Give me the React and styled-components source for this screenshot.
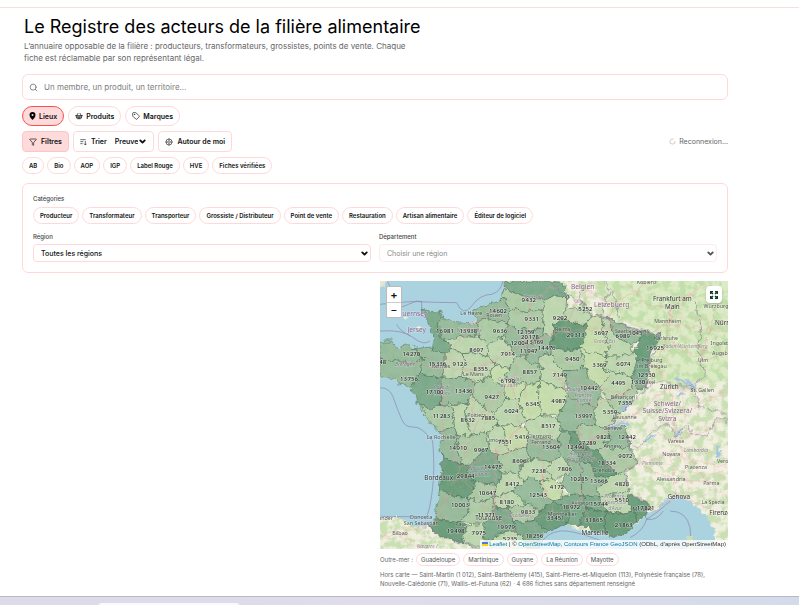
import React, { useState } from "react";
import styled, { createGlobalStyle } from "styled-components";
import { Search, ShoppingBasket, Tag, Funnel, ChevronDown, LoaderCircle } from "lucide-react";

const GlobalStyle = createGlobalStyle`
    * {
        box-sizing: border-box;
    }
    body {
        margin: 0;
        background: #fff;
        color: #111;
        font-family: Inter, "Liberation Sans", sans-serif;
    }
    button, input, select {
        font-family: inherit;
        color: inherit;
    }
`

const TopRule = styled.div`
    height: 8px;
    border-bottom: 1px solid #ffdcdc;
`

const Page = styled.main`
    padding: 6px 71px 8px 22px;
`

const Title = styled.h1`
    margin: 0 2px;
    font-size: 18px;
    line-height: 25px;
    font-weight: 400;
    color: #000;
`

const Intro = styled.p`
    margin: 1px 2px 0;
    max-width: 390px;
    font-size: 8px;
    line-height: 12px;
    color: #666;
`

const SearchBox = styled.label`
    display: flex;
    align-items: center;
    gap: 6px;
    height: 26px;
    margin-top: 10px;
    padding: 0 6px;
    border: 1px solid #ffd9d9;
    border-radius: 6px;
    color: #666;
`

const SearchInput = styled.input`
    flex: 1;
    border: 0;
    outline: 0;
    padding: 0;
    background: none;
    font-size: 8px;

    &::placeholder {
        color: #808080;
        opacity: 1;
    }
`

const Row = styled.div`
    display: flex;
    align-items: center;
    flex-wrap: wrap;
    gap: ${props => props.$gap || 4}px;
    margin-top: ${props => props.$top || 0}px;
`

const Tab = styled.button`
    display: flex;
    align-items: center;
    gap: 3px;
    height: 20px;
    padding: 0 6px;
    border: 1px solid ${props => props.$active ? "#f94f4f" : "#ffd9d9"};
    border-radius: 10px;
    background: ${props => props.$active ? "#ffdada" : "#fff"};
    font-size: 7px;
    font-weight: 600;
`

const Tool = styled.button`
    display: flex;
    align-items: center;
    gap: 4px;
    height: 21px;
    padding: 0 6px;
    border: 1px solid ${props => props.$active ? "#ffc4c4" : "#ffd9d9"};
    border-radius: 4px;
    background: ${props => props.$active ? "#ffdada" : "#fff"};
    font-size: 7px;
    font-weight: 600;
`

const SortBox = styled(Tool).attrs({ as: "label" })``

const SortField = styled.span`
    display: flex;
    align-items: center;
    margin-left: 4px;
`

const SortSelect = styled.select`
    appearance: none;
    border: 0;
    padding: 0;
    background: none;
    font-size: 7px;
    font-weight: 600;
    field-sizing: content;
`

const Status = styled.span`
    display: flex;
    align-items: center;
    gap: 3px;
    margin-left: auto;
    font-size: 7px;
    color: #666;
`

const Chip = styled.button`
    height: 17px;
    padding: 0 6px;
    border: 1px solid #ffd9d9;
    border-radius: 9px;
    background: #fff;
    font-size: 6px;
    font-weight: 600;
`

const Panel = styled.section`
    margin-top: 9px;
    padding: 11px 10px 10px;
    border: 1px solid #ffd9d9;
    border-radius: 6px;
`

const Caption = styled.span`
    display: block;
    font-size: 6px;
    line-height: 8px;
    font-weight: 500;
    color: #444;
`

const Fields = styled.div`
    display: grid;
    grid-template-columns: 1fr 1fr;
    gap: 8px;
    margin-top: 9px;
`

const Field = styled.label`
    position: relative;
    display: block;

    svg {
        position: absolute;
        right: 2px;
        bottom: 4px;
        pointer-events: none;
    }
`

const FieldSelect = styled.select`
    display: block;
    appearance: none;
    width: 100%;
    height: 18px;
    margin-top: 3px;
    padding: 0 7px;
    border: 1px solid #ffd9d9;
    border-radius: 4px;
    background: #fff;
    font-size: 7px;
    font-weight: 500;

    &:disabled {
        color: #888;
        border-color: #ffe9e9;
        opacity: 1;
        font-weight: 400;
    }
`

const Results = styled.section`
    display: grid;
    grid-template-columns: 1fr 1fr;
    gap: 10px;
    margin-top: 8px;
`

const MapColumn = styled.div`
    grid-column: 2;
`

const MapFrame = styled.div`
    position: relative;
    overflow: hidden;
    background: #aad3df;
`

const MapSvg = styled.svg`
    display: block;
    width: 100%;
    height: auto;
`

const ZoomControl = styled.div`
    position: absolute;
    top: 5px;
    left: 6px;
    display: flex;
    flex-direction: column;
    border: 1px solid #bbb;
    border-radius: 2px;
    overflow: hidden;
`

const ZoomButton = styled.button`
    width: 14px;
    height: 15px;
    padding: 0;
    border: 0;
    border-top: ${props => props.$divided ? "1px solid #ccc" : "0"};
    background: #fff;
    font-size: 11px;
    line-height: 14px;
    font-weight: ${props => props.$divided ? 400 : 600};
`

const ExpandButton = styled.button`
    position: absolute;
    top: 5px;
    right: 6px;
    display: flex;
    align-items: center;
    justify-content: center;
    width: 16px;
    height: 17px;
    padding: 0;
    border: 0;
    border-radius: 4px;
    background: #fff;
    box-shadow: 0 1px 2px rgba(0,0,0,0.25);
`

const Attribution = styled.div`
    position: absolute;
    right: 0;
    bottom: 0;
    padding: 0 2px;
    background: rgba(255,255,255,0.8);
    font-family: "Liberation Sans", sans-serif;
    font-size: 6px;
    line-height: 9px;
    color: #333;
    white-space: nowrap;

    a {
        color: #0078a8;
        text-decoration: none;
    }
`

const Overseas = styled.div`
    display: flex;
    align-items: center;
    gap: 3px;
    margin-top: 4px;
    font-size: 6px;
    color: #666;
`

const Territory = styled.button`
    height: 13px;
    padding: 0 4px;
    border: 1px solid #ffd9d9;
    border-radius: 7px;
    background: #fff;
    font-size: 6px;
    color: #555;
`

const OffMap = styled.p`
    margin: 4px 0 0;
    font-size: 6px;
    line-height: 9px;
    color: #666;
`

const BottomBar = styled.footer`
    height: 9px;
    padding: 6px 0 0 98px;
    border-top: 1px solid #b9b9c6;
    background: linear-gradient(90deg, #dddbe9, #e0dcea 50%, #d3dbea);
    overflow: hidden;
`

const BarTab = styled.div`
    width: 142px;
    height: 9px;
    border-radius: 4px 4px 0 0;
    background: #fafafd;
`

const labels = ["AB", "Bio", "AOP", "IGP", "Label Rouge", "HVE", "Fiches vérifiées"];
const categories = ["Producteur", "Transformateur", "Transporteur", "Grossiste / Distributeur", "Point de vente", "Restauration", "Artisan alimentaire", "Éditeur de logiciel"];
const territories = ["Guadeloupe", "Martinique", "Guyane", "La Réunion", "Mayotte"];

const shades = ["#c2dba8", "#b9d3ac", "#a5c6a0", "#8cb494", "#6fa181", "#5a926e"];

// [shade, outline]
const departments = [
    [4, "378,0 510,0 555,10 560,50 520,48 485,55 430,45 378,25"],
    [4, "130,84 150,92 178,88 183,112 175,125 190,178 210,185 212,205 195,213 165,210 158,198 162,175 152,140 140,110"],
    [3, "183,112 230,125 275,128 292,122 298,165 250,165 190,178 175,150 175,125"],
    [1, "190,178 250,165 298,165 325,190 322,225 290,215 250,218 212,205 210,185"],
    [2, "292,122 320,113 350,120 385,130 390,150 370,165 345,185 325,190 298,165"],
    [3, "275,98 295,80 330,68 360,60 372,48 390,85 385,130 350,120 320,113 292,122 290,115"],
    [2, "360,60 378,25 430,45 485,55 490,85 440,92 390,85 372,48"],
    [2, "390,85 440,92 490,85 488,140 450,148 410,142 385,130"],
    [1, "485,55 520,48 560,50 565,75 555,110 525,125 518,175 500,160 488,140 490,85"],
    [1, "560,50 565,75 590,85 605,65 610,85 640,105 620,130 585,130 555,110"],
    [3, "385,130 410,142 450,148 488,140 485,165 445,190 440,225 410,225 385,195 370,165"],
    [3, "488,140 500,160 518,175 510,215 475,230 475,250 440,245 440,225 445,190 485,165"],
    [5, "525,125 555,110 585,130 620,130 618,165 600,200 560,208 510,195 518,175"],
    [2, "510,195 560,208 600,200 612,250 590,270 550,272 525,245 510,215"],
    [0, "620,130 640,105 665,110 670,150 685,195 680,225 640,215 600,200 618,165"],
    [1, "665,110 690,110 700,160 750,190 760,215 720,225 680,225 685,195 670,150"],
    [3, "690,110 730,135 790,152 775,185 750,190 700,160"],
    [5, "790,152 842,160 815,210 810,240 770,235 760,215 775,185"],
    [4, "770,235 810,240 800,320 775,325 758,290 765,260"],
    [1, "680,225 720,225 760,215 770,235 758,290 710,275 670,265"],
    [0, "600,200 640,215 680,225 670,265 690,285 660,320 625,290 612,250"],
    [1, "670,265 710,275 758,290 755,320 720,345 680,355 660,320 690,285"],
    [2, "758,290 775,325 755,365 715,400 700,385 680,355 720,345 755,320"],
    [1, "680,355 700,385 715,400 680,440 645,435 645,375 660,350"],
    [3, "550,272 590,270 612,250 625,290 660,320 660,350 645,375 600,370 565,345 560,300"],
    [1, "475,230 510,215 525,245 550,272 560,300 555,325 510,310 480,300 485,265 475,250"],
    [2, "410,225 440,225 440,245 475,250 485,265 480,300 440,310 395,300 370,285 390,260"],
    [1, "325,190 345,185 370,165 385,195 410,225 390,260 345,250 322,225"],
    [1, "250,218 290,215 322,225 345,250 325,290 290,305 245,290 250,250"],
    [1, "212,205 250,218 250,250 245,290 190,288 195,250 195,213"],
    [3, "100,205 130,200 158,198 165,210 195,213 195,250 190,288 150,290 120,270 130,230"],
    [3, "0,180 35,180 55,205 85,188 100,205 130,230 110,245 50,240 0,235"],
    [3, "0,235 50,240 110,245 130,230 120,270 110,300 90,318 60,310 40,292 0,285"],
    [4, "120,270 150,290 190,288 180,330 185,370 155,385 118,372 105,340 90,318 110,300"],
    [3, "190,288 245,290 290,305 275,340 265,365 185,370 180,330"],
    [2, "118,372 155,385 185,370 215,375 225,440 180,450 150,425"],
    [1, "185,370 265,365 255,400 270,460 240,470 225,440 215,375"],
    [1, "265,365 275,340 300,370 345,400 350,430 320,455 270,460 255,400"],
    [2, "290,305 325,290 370,320 375,350 345,400 300,370 275,340"],
    [0, "345,250 390,260 370,285 395,300 440,310 420,350 375,350 370,320 325,290"],
    [0, "440,310 480,300 475,350 485,400 440,420 415,370 420,350"],
    [1, "375,350 420,350 415,370 440,420 415,435 350,430 345,400"],
    [0, "480,300 510,310 555,325 565,345 535,400 485,400 475,350"],
    [3, "565,345 600,370 645,375 645,435 600,425 585,450 545,450 530,410 535,400"],
    [1, "440,420 485,400 530,410 545,450 535,475 445,465 435,440"],
    [3, "180,450 225,440 240,470 225,500 250,550 220,545 185,518 180,490 190,465"],
    [2, "240,470 270,460 320,455 325,500 300,520 270,550 250,550 225,500"],
    [1, "320,455 350,430 370,440 375,490 390,510 350,525 325,500"],
    [0, "350,430 415,435 435,440 445,465 440,500 390,510 375,490 370,440"],
    [3, "445,465 535,475 545,530 510,540 450,535 440,500"],
    [3, "535,475 545,450 570,450 570,490 600,540 560,540 545,530"],
    [5, "570,450 600,445 600,480 625,500 600,540 570,490"],
    [2, "600,425 645,435 680,440 690,470 675,490 655,510 625,500 600,480 585,450"],
    [3, "680,440 735,435 745,470 745,495 700,505 675,490 690,470"],
    [2, "675,490 700,505 745,495 765,520 770,550 735,570 712,580 690,560 655,510"],
    [5, "625,500 655,510 690,560 712,580 690,590 650,590 630,550 600,540"],
    [3, "600,540 630,550 650,590 690,590 655,620 660,650 610,645 605,590"],
    [3, "560,540 600,540 605,590 610,645 570,640 545,610 560,580"],
    [1, "690,590 712,580 735,570 740,600 748,625 700,640 660,650 655,620"],
    [1, "510,540 545,530 560,540 575,560 560,580 520,595 500,565"],
    [1, "450,535 510,540 500,565 520,595 480,600 460,590 425,600 415,575 425,545"],
    [2, "350,525 390,510 440,500 450,535 425,545 415,575 365,580 355,545"],
    [4, "270,550 300,520 325,500 350,525 365,580 355,610 290,605 255,590"],
    [5, "188,518 220,545 250,550 270,550 255,590 290,605 265,650 215,645 178,625"],
    [3, "178,625 215,645 265,650 270,690 240,725 165,715"],
    [2, "290,605 355,610 340,650 300,665 265,650"],
    [1, "355,610 365,580 415,575 425,600 400,630 370,640 340,650"],
    [3, "425,600 460,590 480,600 490,640 520,660 480,690 440,670 400,630"],
    [0, "480,600 520,595 545,610 545,650 520,660 490,640"],
    [1, "340,650 370,640 400,630 440,670 380,680 340,680"],
    [2, "265,650 300,665 340,650 340,710 310,730 240,725 270,690"],
    [2, "380,680 440,670 480,690 460,720 400,725"],
    [4, "340,680 380,680 400,725 410,750 350,760 320,790 310,730 340,710"],
    [5, "145,740 165,715 240,725 260,735 250,790 180,765"],
    [1, "260,735 310,730 320,790 300,810 250,790"],
    [1, "350,760 410,750 430,780 440,810 340,810 320,790"],
    [4, "400,725 460,720 500,750 480,775 480,810 440,810 430,780 410,750"],
    [5, "460,720 480,690 520,660 570,690 560,730 500,750"],
    [4, "545,650 570,640 610,645 620,680 595,730 560,730 570,690 520,660"],
    [4, "610,645 660,650 680,695 620,680"],
    [1, "660,650 700,640 748,625 745,660 760,690 710,700 680,695"],
    [5, "748,640 775,655 808,665 800,700 770,720 760,690 745,660"],
    [5, "620,680 680,695 670,755 640,750 595,730"],
    [5, "680,695 710,700 760,690 770,720 745,755 700,768 670,755"],
];

const counts = [
    [446, 62, "9 432"], [354, 95, "14 602"], [455, 121, "9 331"], [540, 117, "9 292"], [616, 90, "5 252"],
    [195, 156, "16 981"], [265, 156, "13 938"], [360, 156, "9 636"], [437, 159, "12 159"], [450, 174, "20 178"],
    [418, 191, "12 004"], [464, 189, "13 169"], [500, 206, "14 476"], [446, 216, "11 947"], [587, 168, "29 313"],
    [663, 163, "3 697"], [728, 170, "6 989"], [766, 163, "1 045"], [825, 208, "16 925"], [94, 224, "14 270"],
    [289, 212, "8 697"], [383, 224, "7 914"], [577, 239, "9 450"], [172, 255, "15 336"], [239, 255, "9 123"],
    [302, 270, "8 355"], [658, 258, "3 369"], [730, 255, "6 074"], [-8, 248, "12 148"], [87, 299, "13 756"],
    [449, 280, "8 857"], [539, 287, "7 149"], [799, 287, "12 530"], [383, 307, "6 190"], [715, 311, "4 495"],
    [774, 310, "1 330"], [164, 340, "17 100"], [251, 336, "13 436"], [627, 328, "10 442"], [335, 355, "9 427"],
    [458, 374, "6 345"], [535, 365, "4 987"], [735, 372, "7 355"], [184, 411, "11 283"], [263, 423, "8 632"],
    [324, 417, "7 885"], [394, 396, "6 024"], [610, 412, "13 997"], [690, 398, "5 359"], [505, 441, "8 517"],
    [426, 473, "5 416"], [375, 488, "7 551"], [234, 507, "14 910"], [303, 513, "9 967"], [513, 503, "13 604"],
    [587, 503, "12 490"], [622, 491, "27 289"], [670, 473, "9 828"], [741, 474, "12 442"], [736, 530, "9 072"],
    [681, 551, "18 334"], [418, 546, "8 696"], [339, 565, "14 475"], [476, 575, "7 238"], [554, 571, "7 806"],
    [257, 592, "29 844"], [597, 599, "10 285"], [657, 606, "13 666"], [726, 614, "4 828"], [397, 616, "8 412"],
    [531, 625, "4 172"], [322, 642, "10 647"], [474, 648, "12 543"], [240, 677, "10 003"], [380, 670, "8 180"],
    [574, 683, "18 972"], [657, 674, "15 744"], [725, 662, "5 510"], [444, 698, "9 833"], [319, 707, "11 571"],
    [797, 688, "17 821"], [527, 718, "33 451"], [642, 722, "31 865"], [731, 738, "21 863"], [227, 757, "19 498"],
    [378, 744, "19 979"], [296, 763, "7 975"], [463, 770, "18 256"], [390, 780, "5 235"],
];

// [x, y, name, kind]
const places = [
    [608, 24, "Belgien", "country"], [695, 79, "Lëtzebuerg", "country"], [97, 105, "Guernsey", "country"],
    [110, 152, "Jersey", "country"], [862, 374, "Schweiz/", "country"], [862, 397, "Suisse/Svizzera/", "country"],
    [862, 420, "Svizra", "country"],
    [877, 61, "Frankfurt am", "city"], [877, 84, "Main", "city"], [868, 324, "Zürich", "city"],
    [896, 655, "Genova", "city"], [176, 597, "Bordeaux", "city"], [326, 718, "Toulouse", "city"],
    [645, 763, "Marseille", "city"], [1020, 701, "Firenze", "city"], [1028, 133, "Nürn", "city"],
    [800, 8, "Koblenz", "town"], [863, 125, "Mannheim", "town"], [1008, 81, "Würzburg", "town"],
    [858, 177, "Karlsruhe", "town"], [1018, 193, "Ingolst", "town"], [1020, 223, "Augsb", "town"],
    [969, 243, "Ulm", "town"], [816, 243, "Freiburg", "town"], [816, 262, "im Breisgau", "town"],
    [806, 308, "Basel", "town"], [967, 333, "St. Gallen", "town"], [734, 415, "Lausanne", "town"],
    [698, 447, "Genève", "town"], [698, 502, "Annecy", "town"], [672, 573, "Grenoble", "town"],
    [888, 486, "Varese", "town"], [874, 524, "Novara", "town"], [948, 563, "Piacenza", "town"],
    [873, 601, "Alessandria", "town"], [994, 611, "Parma", "town"], [999, 670, "La Spezia", "town"],
    [1028, 546, "Vero", "town"], [788, 690, "Monaco", "town"], [547, 705, "Montpellier", "town"],
    [605, 672, "Avignon", "town"], [240, 735, "Pau", "town"], [124, 713, "Donostia", "town"],
    [124, 733, "San Sebastián", "town"], [0, 718, "Santander", "town"], [60, 763, "Bilbao", "town"],
    [183, 474, "La Rochelle", "town"], [350, 484, "Limoges", "town"], [481, 471, "Clermont-", "town"],
    [483, 490, "Ferrand", "town"], [290, 407, "Poitiers", "town"], [280, 284, "Le Mans", "town"],
    [183, 262, "Rennes", "town"], [274, 102, "Le Havre", "town"], [343, 107, "Rouen", "town"],
    [548, 150, "Reims", "town"], [752, 155, "Saarbrücken", "town"], [729, 353, "Besançon", "town"],
    [673, 186, "Grand Est", "region"], [915, 201, "Baden-Württemberg", "region"], [75, 255, "Bretagne", "region"],
    [187, 324, "Pays de", "region"], [187, 343, "la Loire", "region"], [388, 300, "Centre-Val", "region"],
    [388, 319, "de Loire", "region"], [600, 330, "Bourgogne-", "region"], [612, 347, "Franche-", "region"],
    [612, 364, "Comté", "region"], [817, 552, "Piemonte", "region"], [948, 512, "Lombardia", "region"],
    [602, 522, "Auvergne-", "region"], [602, 540, "Rhône-Alpes", "region"], [298, 567, "Nouvelle-", "region"],
    [298, 585, "Aquitaine", "region"], [418, 708, "Occitanie", "region"], [705, 652, "Provence-", "region"],
    [705, 670, "Alpes-Côte", "region"], [705, 688, "d'Azur", "region"], [142, 802, "Navarre /", "region"],
    [268, 152, "Normandie", "region"], [458, 54, "Hauts-de", "region"],
];

const placeStyles = {
    country: { size: 20, fill: "#8d618b", opacity: 1 },
    city: { size: 19, fill: "#333", opacity: 1 },
    town: { size: 16, fill: "#333", opacity: 0.8 },
    region: { size: 15, fill: "#7d5c85", opacity: 0.7 },
};

const continent = "M378,-10 L375,35 L360,60 L330,68 L295,80 L275,98 L290,115 L275,128 L230,125 L183,112 L178,88 L150,92 L130,84 L140,110 L152,140 L162,175 L158,198 L130,200 L100,205 L85,188 L55,205 L35,180 L-10,180 L-10,285 L40,292 L60,310 L90,318 L105,340 L118,372 L150,425 L180,450 L190,465 L180,490 L188,518 L178,625 L165,715 L145,740 L100,735 L60,708 L-10,714 L-10,820 L480,820 L480,775 L500,750 L540,728 L570,735 L600,750 L640,755 L670,758 L700,768 L745,755 L770,725 L800,700 L830,684 L860,652 L890,640 L930,660 L975,700 L1000,740 L1010,820 L1060,820 L1060,-10 Z";

const roads = [
    "M440,190 L350,95 M440,190 L455,60 L520,20 M440,190 L550,150 L690,140 L800,160 L860,130 L877,80 L930,30",
    "M440,190 L395,300 L300,400 L240,560 L165,730 L60,760 M440,190 L280,270 L180,260 L60,240",
    "M440,190 L540,290 L600,390 L600,500 L600,650 L640,740 M395,300 L420,440 L350,500 L340,710",
    "M600,500 L700,440 L760,400 L868,320 L970,330 M600,500 L680,560 L780,550 L870,520 L1040,560",
    "M340,710 L530,705 L600,650 M240,580 L340,710 L440,770 M600,390 L730,340 L810,300 L860,170 L877,80",
    "M870,520 L890,640 L1000,690 M780,550 L890,600 L1000,600 M808,700 L896,640 M868,320 L890,480 L948,560",
    "M960,240 L858,170 M960,240 L1040,220 M960,240 L1008,80 M860,130 L1040,150 M690,140 L695,70 L608,20",
    "M695,70 L800,10 M550,150 L608,20 M540,290 L730,340 M240,560 L480,480 L600,500 M480,480 L490,620 L530,705",
    "M280,270 L280,400 M180,260 L190,350 L190,470 L240,560 M350,95 L270,130 L180,260 M0,770 L60,760 L120,800",
    "M740,0 L800,70 L877,80 L960,20 M800,230 L860,300 M930,380 L1044,330 M820,450 L888,480 L990,440 M948,560 L994,610 L1044,650",
];

const borders = [
    "M505,0 L560,45 L605,65 L640,105 L690,110 L730,135 L842,160 L812,240 L800,320 L755,365 L715,400 L680,440 L735,435 L745,495 L770,550 L735,580 L750,640 L808,665 L800,700",
    "M600,70 L600,35 M660,105 L675,60 L690,30 L710,60 L715,110 M690,30 L670,0",
    "M800,320 L850,300 L880,310 L940,320 L960,380 L1044,400 M745,475 L770,500 L800,470 L830,440 L870,430 L890,470 L920,430 L940,460 L985,465 L1010,410 L1044,420",
    "M945,60 L965,140 L955,200 L975,280 L940,320",
    "M145,740 L180,765 L250,790 L330,804",
];

const seaBorders = [
    "M20,0 Q35,28 60,30 M0,70 Q90,60 120,62 T230,65 Q250,110 275,75 T335,40 Q365,30 368,0 M0,150 Q70,145 100,170 T150,180 M60,80 L110,60 L125,62 L125,105 L150,115 M50,130 Q60,150 90,165",
    "M0,320 Q30,320 40,350 T65,415 Q75,440 100,438 T158,480 Q165,560 158,620 T140,708 L0,706",
    "M480,790 Q500,755 540,750 T690,790 M750,770 Q790,750 800,715 Q840,690 870,660 M870,690 Q920,690 930,740 T900,804 M790,690 L800,715 Q830,720 850,690",
];

function MapLabel(props) {
    const look = placeStyles[props.kind];

    return (
        <text
            x={props.x}
            y={props.y}
            fontFamily="'Noto Sans', sans-serif"
            fontSize={look.size}
            fontStyle={props.kind === "region" ? "italic" : "normal"}
            fill={look.fill}
            opacity={look.opacity}
            stroke="#fff"
            strokeWidth="3"
            strokeOpacity="0.4"
            paintOrder="stroke"
            textAnchor="middle"
        >
            {props.children}
        </text>
    );
}

function FranceMap() {
    return (
        <MapSvg viewBox="0 0 1044 804" role="img" aria-label="Carte des départements">
            <defs>
                <filter id="coast" x="0" y="0" width="1044" height="804" filterUnits="userSpaceOnUse">
                    <feTurbulence type="fractalNoise" baseFrequency="0.05" numOctaves="3" seed="4" />
                    <feDisplacementMap in="SourceGraphic" scale="24" xChannelSelector="R" yChannelSelector="G" />
                </filter>
                <filter id="woods" x="0" y="0" width="1044" height="804" filterUnits="userSpaceOnUse" colorInterpolationFilters="sRGB">
                    <feTurbulence type="fractalNoise" baseFrequency="0.04" numOctaves="5" seed="9" />
                    <feColorMatrix values="0 0 0 0 0.70  0 0 0 0 0.84  0 0 0 0 0.60  0 5 0 0 -2.1" />
                    <feComposite operator="in" in2="SourceGraphic" />
                </filter>
            </defs>
            <rect width="1044" height="804" fill="#aad3df" />
            {seaBorders.map(d => (
                <path key={d} d={d} fill="none" stroke="#8b7ba6" strokeWidth="3" opacity="0.6" />
            ))}
            <g filter="url(#coast)">
                <path d={continent} fill="#f0efdf" />
                <path d="M640,-10 L1060,-10 L1060,300 L860,310 L800,300 L842,160 L690,110 Z" fill="#dcebc6" />
                <path d="M780,500 L830,480 L1060,500 L1060,600 L900,610 L790,590 Z" fill="#f3f0e2" />
                <path d="M-10,-10 L22,-10 L12,14 L-10,28 Z" fill="#e9e6cf" />
                <ellipse cx="115" cy="140" rx="9" ry="5" fill="#edf0d8" />
                <ellipse cx="80" cy="108" rx="7" ry="5" fill="#edf0d8" />
                <path d="M920,804 L922,768 L936,764 L938,804 Z" fill="#cddfb0" />
            </g>
            <path d={continent} fill="#fff" filter="url(#woods)" opacity="0.6" />
            <g filter="url(#coast)">
                {departments.map(([shade, points]) => (
                    <polygon key={points} points={points} fill={shades[shade]} fillOpacity="0.85" stroke="#4a6656" strokeWidth="2" strokeOpacity="0.8" />
                ))}
            </g>
            <g filter="url(#coast)" fill="none">
                <path d="M690,440 Q720,415 750,432 M720,385 L755,365 M885,290 Q920,300 945,325 M790,480 L825,465 M890,345 L915,335 M905,445 L885,470 M1010,490 L1020,530" stroke="#9dc4e8" strokeWidth="8" />
                {roads.map(d => (
                    <path key={d} d={d} stroke="#ee98a2" strokeWidth="3" opacity="0.5" />
                ))}
                {roads.map(d => (
                    <path key={d} d={d} transform="translate(34 -22)" stroke="#efa5aa" strokeWidth="2" opacity="0.35" />
                ))}
                {borders.map(d => (
                    <path key={d} d={d} stroke="#8b7598" strokeWidth="3" opacity="0.65" />
                ))}
            </g>
            {places.map(([x, y, name, kind]) => (
                <MapLabel key={name} x={x} y={y} kind={kind}>{name}</MapLabel>
            ))}
            <g fontFamily="'Noto Sans', sans-serif" fontSize="18" fontWeight="500" fill="#222" stroke="#fff" strokeWidth="3" strokeOpacity="0.5" paintOrder="stroke" textAnchor="middle">
                {counts.map(([x, y, value]) => (
                    <text key={value} x={x} y={y}>{value.replace(" ", "\u200a")}</text>
                ))}
            </g>
        </MapSvg>
    );
}

function PinIcon() {
    return (
        <svg width="7" height="8" viewBox="0 0 14 16">
            <path fill="#000" fillRule="evenodd" d="M7 0a6 6 0 0 0-6 6c0 4 4 8 6 10 2-2 6-6 6-10a6 6 0 0 0-6-6zm0 4a2 2 0 1 1 0 4 2 2 0 0 1 0-4z" />
        </svg>
    );
}

function SortIcon() {
    return (
        <svg width="7" height="8" viewBox="0 0 21 24" fill="none" stroke="#222" strokeWidth="2">
            <path d="M1 5h16M1 11h9M1 17h7M16 9v12M12 17l4 4 4-4" />
        </svg>
    );
}

function TargetIcon() {
    return (
        <svg width="8" height="8" viewBox="0 0 24 24" fill="none" stroke="#222" strokeWidth="2">
            <circle cx="12" cy="12" r="9" />
            <circle cx="12" cy="12" r="4" />
            <path d="M12 1v4M12 19v4M1 12h4M19 12h4" />
        </svg>
    );
}

function App() {
    const [tab, setTab] = useState("Lieux");
    const [showFilters, setShowFilters] = useState(true);

    return (
        <>
            <GlobalStyle />
            <TopRule />
            <Page>
                <Title>Le Registre des acteurs de la filière alimentaire</Title>
                <Intro>L’annuaire opposable de la filière : producteurs, transformateurs, grossistes, points de vente. Chaque fiche est réclamable par son représentant légal.</Intro>

                <SearchBox>
                    <Search size={9} />
                    <SearchInput type="search" aria-label="Rechercher" placeholder="Un membre, un produit, un territoire…" />
                </SearchBox>

                <Row $top={6}>
                    <Tab $active={tab === "Lieux"} onClick={() => setTab("Lieux")}>
                        <PinIcon />
                        Lieux
                    </Tab>
                    <Tab $active={tab === "Produits"} onClick={() => setTab("Produits")}>
                        <ShoppingBasket size={8} />
                        Produits
                    </Tab>
                    <Tab $active={tab === "Marques"} onClick={() => setTab("Marques")}>
                        <Tag size={8} />
                        Marques
                    </Tab>
                </Row>

                <Row $top={5}>
                    <Tool $active={showFilters} onClick={() => setShowFilters(!showFilters)}>
                        <Funnel size={8} />
                        Filtres
                    </Tool>
                    <SortBox>
                        <SortIcon />
                        Trier
                        <SortField>
                            <SortSelect defaultValue="Preuve">
                                <option>Preuve</option>
                            </SortSelect>
                            <ChevronDown size={9} strokeWidth={5} />
                        </SortField>
                    </SortBox>
                    <Tool>
                        <TargetIcon />
                        Autour de moi
                    </Tool>
                    <Status>
                        <LoaderCircle size={7} color="#aaa" />
                        Reconnexion…
                    </Status>
                </Row>

                <Row $top={5} $gap={3}>
                    {labels.map(label => <Chip key={label}>{label}</Chip>)}
                </Row>

                {showFilters && (
                    <Panel>
                        <Caption>Catégories</Caption>
                        <Row $top={4} $gap={3}>
                            {categories.map(category => <Chip key={category}>{category}</Chip>)}
                        </Row>
                        <Fields>
                            <Field>
                                <Caption>Région</Caption>
                                <FieldSelect>
                                    <option>Toutes les régions</option>
                                </FieldSelect>
                                <ChevronDown size={9} strokeWidth={5} />
                            </Field>
                            <Field>
                                <Caption>Département</Caption>
                                <FieldSelect disabled>
                                    <option>Choisir une région</option>
                                </FieldSelect>
                                <ChevronDown size={9} strokeWidth={5} color="#555" />
                            </Field>
                        </Fields>
                    </Panel>
                )}

                <Results>
                    <MapColumn>
                        <MapFrame>
                            <FranceMap />
                            <ZoomControl>
                                <ZoomButton aria-label="Zoom avant">+</ZoomButton>
                                <ZoomButton $divided aria-label="Zoom arrière">−</ZoomButton>
                            </ZoomControl>
                            <ExpandButton aria-label="Plein écran">
                                <svg width="8" height="8" viewBox="0 0 24 24" fill="none" stroke="#123c2a" strokeWidth="4">
                                    <path d="M2,9 V2 H9 M2,2 L9,9 M15,2 H22 V9 M22,2 L15,9 M2,15 V22 H9 M2,22 L9,15 M22,15 V22 H15 M22,22 L15,15" />
                                </svg>
                            </ExpandButton>
                            <Attribution>
                                <svg width="6" height="4" viewBox="0 0 12 8">
                                    <path fill="#4C7BE1" d="M0 0h12v4H0z" />
                                    <path fill="#FFD500" d="M0 4h12v4H0z" />
                                </svg>
                                {" "}<a href="#leaflet">Leaflet</a> | © <a href="#osm">OpenStreetMap</a>, <a href="#contours">Contours France GeoJSON</a> (ODbL, d’après OpenStreetMap)
                            </Attribution>
                        </MapFrame>
                        <Overseas>
                            Outre-mer :
                            {territories.map(name => <Territory key={name}>{name}</Territory>)}
                        </Overseas>
                        <OffMap>
                            Hors carte — Saint-Martin (1 012), Saint-Barthélemy (415), Saint-Pierre-et-Miquelon (113), Polynésie française (78), Nouvelle-Calédonie (71), Wallis-et-Futuna (62) · 4 686 fiches sans département renseigné
                        </OffMap>
                    </MapColumn>
                </Results>
            </Page>
            <BottomBar>
                <BarTab />
            </BottomBar>
        </>
    );
}

export default App;
